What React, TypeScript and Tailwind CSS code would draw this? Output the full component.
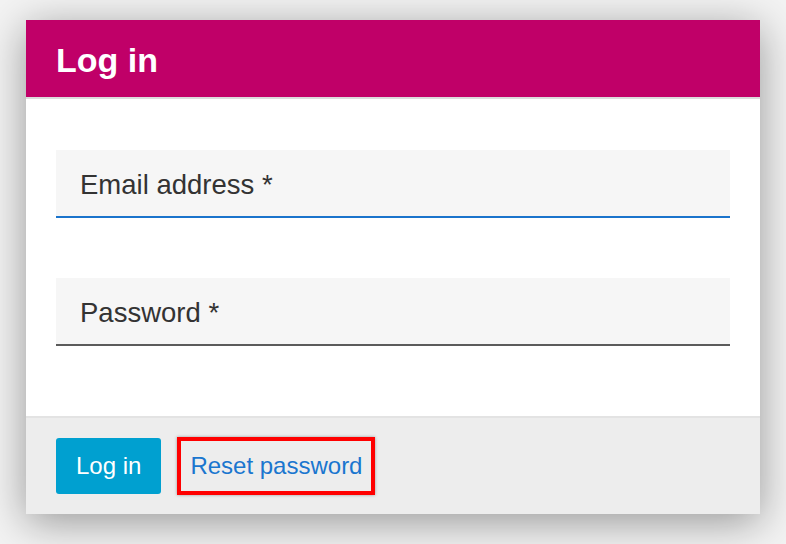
import React from "react";

export default function App() {
  return (
    <div
      className="w-[786px] h-[544px] overflow-hidden bg-[#f3f3f3] pt-[20px] pl-[26px]"
      style={{ fontFamily: '"Liberation Sans", Arial, sans-serif' }}
    >
      <div className="w-[734px] h-[494px] flex flex-col bg-white shadow-[0_8px_40px_rgba(0,0,0,0.38)]">
        <div className="h-[79px] shrink-0 bg-[#c00068] border-b-[2px] border-[#dcdcdc] flex items-center pl-[30px]">
          <h1 className="text-[34px] font-bold text-white leading-none mt-[2px]">Log in</h1>
        </div>
        <div className="flex-1 px-[30px] pt-[51px] flex flex-col">
          <div className="h-[68px] bg-[#f6f6f6] border-b-[2px] border-[#1b74cc] flex items-center pl-[24px]">
            <span className="text-[27.5px] text-[#333] leading-none mt-[4px]">Email address *</span>
          </div>
          <div className="h-[68px] mt-[60px] bg-[#f6f6f6] border-b-[2px] border-[#5b5b5b] flex items-center pl-[24px]">
            <span className="text-[27.5px] text-[#333] leading-none mt-[4px]">Password *</span>
          </div>
        </div>
        <div className="h-[98px] shrink-0 bg-[#ededed] border-t-[2px] border-[#e3e3e3] flex items-center pl-[30px]">
          <button className="h-[56px] px-[20px] rounded-[3px] bg-[#00a0d0] text-white text-[24px] leading-none">
            Log in
          </button>
          <a
            href="#"
            className="ml-[16px] h-[58px] px-[9px] flex items-center border-[4px] border-[#ff0000] text-[#1a76cf] text-[24px] leading-none shadow-[0_0_3px_rgba(0,0,0,0.35)]"
          >
            Reset password
          </a>
        </div>
      </div>
    </div>
  );
}
